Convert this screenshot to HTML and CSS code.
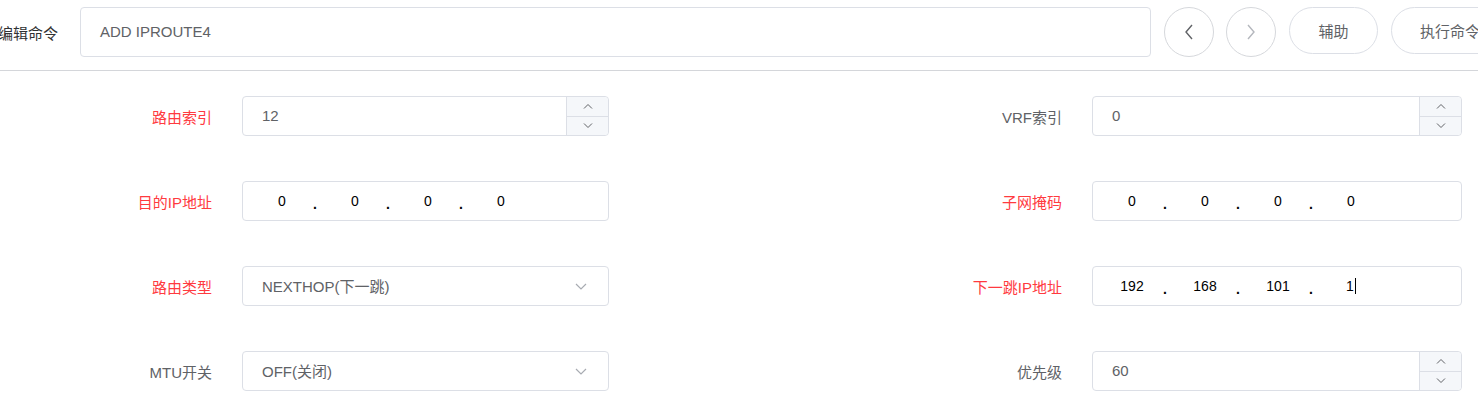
FILE: index.html
```html
<!DOCTYPE html>
<html lang="zh-CN">
    <head>
        <meta charset="UTF-8">
        <meta name="viewport" content="width=device-width, initial-scale=1.0">
        <title>ADD IPROUTE4</title>
        <link rel="stylesheet" href="styles.css">
    </head>
    <body>
        <div id="cmdbar">
            <label class="cmd_label">编辑命令</label>
            <div class="cmd_input">ADD IPROUTE4</div>
            <button class="circle_btn">
                <svg width="12" height="18" viewBox="0 0 12 18"><polyline points="9,2 3,9 9,16" fill="none" stroke="#606266" stroke-width="1.4"/></svg>
            </button>
            <button class="circle_btn">
                <svg width="12" height="18" viewBox="0 0 12 18"><polyline points="3,2 9,9 3,16" fill="none" stroke="#b4b7bd" stroke-width="1.4"/></svg>
            </button>
            <button class="pill_btn">辅助</button>
            <button class="pill_btn wide">执行命令</button>
        </div>
        <div id="form">
            <div class="row">
                <label class="lbl req">路由索引</label>
                <div class="field num">
                    <span class="val">12</span>
                    <div class="spin">
                        <span class="up"><svg width="10" height="6" viewBox="0 0 10 6"><polyline points="1,5.5 5,1.5 9,5.5" fill="none" stroke="#606266" stroke-width="1"/></svg></span>
                        <span class="down"><svg width="10" height="6" viewBox="0 0 10 6"><polyline points="1,0.5 5,4.5 9,0.5" fill="none" stroke="#606266" stroke-width="1"/></svg></span>
                    </div>
                </div>
            </div>
            <div class="row">
                <label class="lbl">VRF索引</label>
                <div class="field num">
                    <span class="val">0</span>
                    <div class="spin">
                        <span class="up"><svg width="10" height="6" viewBox="0 0 10 6"><polyline points="1,5.5 5,1.5 9,5.5" fill="none" stroke="#606266" stroke-width="1"/></svg></span>
                        <span class="down"><svg width="10" height="6" viewBox="0 0 10 6"><polyline points="1,0.5 5,4.5 9,0.5" fill="none" stroke="#606266" stroke-width="1"/></svg></span>
                    </div>
                </div>
            </div>
            <div class="row">
                <label class="lbl req">目的IP地址</label>
                <div class="field ip">
                    <span class="oct">0</span><span class="dot">.</span>
                    <span class="oct">0</span><span class="dot">.</span>
                    <span class="oct">0</span><span class="dot">.</span>
                    <span class="oct">0</span>
                </div>
            </div>
            <div class="row">
                <label class="lbl req">子网掩码</label>
                <div class="field ip">
                    <span class="oct">0</span><span class="dot">.</span>
                    <span class="oct">0</span><span class="dot">.</span>
                    <span class="oct">0</span><span class="dot">.</span>
                    <span class="oct">0</span>
                </div>
            </div>
            <div class="row">
                <label class="lbl req">路由类型</label>
                <div class="field sel">
                    <span class="val">NEXTHOP(下一跳)</span>
                    <svg class="caret" width="12" height="7" viewBox="0 0 12 7"><polyline points="1,1 6,6 11,1" fill="none" stroke="#a8abb2" stroke-width="1.2"/></svg>
                </div>
            </div>
            <div class="row">
                <label class="lbl req">下一跳IP地址</label>
                <div class="field ip">
                    <span class="oct">192</span><span class="dot">.</span>
                    <span class="oct">168</span><span class="dot">.</span>
                    <span class="oct">101</span><span class="dot">.</span>
                    <span class="oct"><span class="caret_txt">1</span></span>
                </div>
            </div>
            <div class="row">
                <label class="lbl">MTU开关</label>
                <div class="field sel">
                    <span class="val">OFF(关闭)</span>
                    <svg class="caret" width="12" height="7" viewBox="0 0 12 7"><polyline points="1,1 6,6 11,1" fill="none" stroke="#a8abb2" stroke-width="1.2"/></svg>
                </div>
            </div>
            <div class="row">
                <label class="lbl">优先级</label>
                <div class="field num">
                    <span class="val">60</span>
                    <div class="spin">
                        <span class="up"><svg width="10" height="6" viewBox="0 0 10 6"><polyline points="1,5.5 5,1.5 9,5.5" fill="none" stroke="#606266" stroke-width="1"/></svg></span>
                        <span class="down"><svg width="10" height="6" viewBox="0 0 10 6"><polyline points="1,0.5 5,4.5 9,0.5" fill="none" stroke="#606266" stroke-width="1"/></svg></span>
                    </div>
                </div>
            </div>
        </div>
    </body>
</html>
```

FILE: styles.css
```css
body{
    margin:0;
    background:#fff;
    font-family:"Liberation Sans","Noto Sans CJK SC",sans-serif;
    font-size:15px;
    color:#606266;
    overflow:hidden;
}
#cmdbar{
    display:flex;
    align-items:center;
    height:70px;
    border-bottom:1px solid #d4d6da;
    white-space:nowrap;
}
.cmd_label{
    flex-shrink:0;
    width:82px;
    margin-left:-2px;
    margin-top:-6px;
    color:#303133;
}
.cmd_input{
    flex-shrink:0;
    box-sizing:border-box;
    width:1071px;
    height:50px;
    margin-top:-6px;
    line-height:48px;
    padding-left:19px;
    border:1px solid #dcdfe6;
    border-radius:4px;
}
.circle_btn{
    flex-shrink:0;
    box-sizing:border-box;
    width:50px;
    height:50px;
    margin-left:13px;
    margin-top:-6px;
    border:1px solid #d6d8dc;
    border-radius:50%;
    background:#fff;
    display:flex;
    align-items:center;
    justify-content:center;
    padding:0;
}
.circle_btn + .circle_btn{
    margin-left:12px;
}
.pill_btn{
    flex-shrink:0;
    box-sizing:border-box;
    width:89px;
    height:47px;
    margin-left:13px;
    margin-top:-9px;
    border:1px solid #dcdfe6;
    border-radius:24px;
    background:#fff;
    font-family:inherit;
    font-size:15px;
    color:#606266;
}
.pill_btn.wide{
    width:120px;
    text-align:left;
    padding-left:28px;
}
#form{
    display:grid;
    grid-template-columns:850px 1fr;
    row-gap:45px;
    padding-top:25px;
}
.row{
    display:flex;
    align-items:center;
}
.lbl{
    width:212px;
    text-align:right;
    margin-right:30px;
    color:#606266;
}
.lbl.req{
    color:#ff3a3f;
}
.field{
    box-sizing:border-box;
    width:367px;
    height:40px;
    border:1px solid #dcdfe6;
    border-radius:4px;
    display:flex;
    align-items:center;
    background:#fff;
}
.row:nth-child(even) .field{
    width:370px;
}
.field .val{
    flex:1;
    padding-left:19px;
    margin-top:-1px;
}
.spin{
    width:41px;
    height:100%;
    border-left:1px solid #dcdfe6;
    background:#f5f7fa;
    border-radius:0 4px 4px 0;
    display:flex;
    flex-direction:column;
}
.spin span{
    flex:1;
    display:flex;
    align-items:center;
    justify-content:center;
}
.spin .up{
    border-bottom:1px solid #dcdfe6;
}
.sel .caret{
    margin-right:21px;
}
.ip{
    padding-left:14px;
    font-family:"Liberation Sans",sans-serif;
    font-size:14px;
    color:#000;
}
.oct{
    width:50px;
    text-align:center;
}
.dot{
    width:23px;
    padding-left:6px;
    box-sizing:border-box;
    margin-top:6px;
    font-weight:bold;
}
.caret_txt{
    border-right:1px solid #000;
    padding-right:1px;
}
```
